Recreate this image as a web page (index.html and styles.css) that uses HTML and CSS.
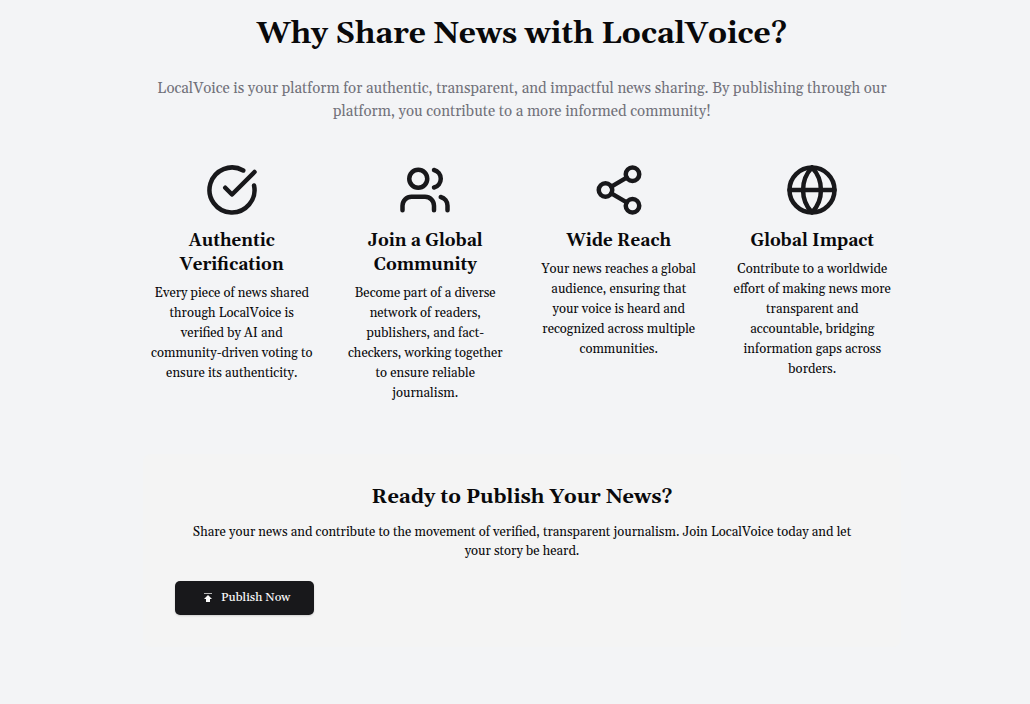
FILE: index.html
```html
<!DOCTYPE html>
<html lang="en">
<head>
<meta charset="utf-8">
<meta name="viewport" content="width=device-width, initial-scale=1">
<title>Why Share News with LocalVoice?</title>
<link rel="stylesheet" href="styles.css">
</head>
<body>
<main class="page">
  <section class="intro">
    <h1 class="title">Why Share News with LocalVoice?</h1>
    <p class="lead">LocalVoice is your platform for authentic, transparent, and impactful news sharing. By publishing through our platform, you contribute to a more informed community!</p>
  </section>
  <section class="features">
    <article class="feature">
      <svg class="icon" viewBox="0 0 24 24" aria-hidden="true"><path d="M21.801 10A10 10 0 1 1 17 3.335"/><path d="m9 11 3 3L22 4"/></svg>
      <h2 class="feature-title">Authentic Verification</h2>
      <p class="feature-text">Every piece of news shared through LocalVoice is verified by AI and community-driven voting to ensure its authenticity.</p>
    </article>
    <article class="feature">
      <svg class="icon" viewBox="0 0 24 24" aria-hidden="true"><path d="M16 21v-2a4 4 0 0 0-4-4H6a4 4 0 0 0-4 4v2"/><circle cx="9" cy="7" r="4"/><path d="M22 21v-2a4 4 0 0 0-3-3.87"/><path d="M16 3.13a4 4 0 0 1 0 7.75"/></svg>
      <h2 class="feature-title">Join a Global Community</h2>
      <p class="feature-text">Become part of a diverse network of readers, publishers, and fact-checkers, working together to ensure reliable journalism.</p>
    </article>
    <article class="feature">
      <svg class="icon" viewBox="0 0 24 24" aria-hidden="true"><circle cx="18" cy="5" r="3"/><circle cx="6" cy="12" r="3"/><circle cx="18" cy="19" r="3"/><path d="m8.59 13.51 6.83 3.98M15.41 6.51l-6.82 3.98"/></svg>
      <h2 class="feature-title">Wide Reach</h2>
      <p class="feature-text">Your news reaches a global audience, ensuring that your voice is heard and recognized across multiple communities.</p>
    </article>
    <article class="feature">
      <svg class="icon" viewBox="0 0 24 24" aria-hidden="true"><circle cx="12" cy="12" r="10"/><path d="M12 2c-5.3 5.5-5.3 14.500 0 20c5.300-5.500 5.300-14.500 0-20M2 12h20"/></svg>
      <h2 class="feature-title">Global Impact</h2>
      <p class="feature-text">Contribute to a worldwide effort of making news more transparent and accountable, bridging information gaps across borders.</p>
    </article>
  </section>
  <section class="cta">
    <h2 class="cta-title">Ready to Publish Your News?</h2>
    <p class="cta-text">Share your news and contribute to the movement of verified, transparent journalism. Join LocalVoice today and let your story be heard.</p>
    <button class="publish" type="button">
      <svg class="publish-icon" viewBox="0 0 10 10" aria-hidden="true"><path opacity=".7" d="M1 0h8v1H1z"/><path d="M5 2l4 4H7v3H3V6H1z"/></svg>
      Publish Now
    </button>
  </section>
</main>
</body>
</html>
```
FILE: styles.css
```css
* {
  box-sizing: border-box;
}

body {
  margin: 0;
  padding-left: 14px;
  min-height: 100vh;
  background: #f3f4f6;
  color: #09090b;
  font-family: Georgia, Gelasio, "Liberation Serif", serif;
}

h1, h2, p {
  margin: 0;
}

.page {
  max-width: 758px;
  margin: 0 auto;
  padding: 16px 0 48px;
}

.intro {
  text-align: center;
}

.title {
  font-size: 30px;
  line-height: 36px;
  font-weight: 700;
}

.lead {
  margin-top: 25px;
  color: #71717a;
  font-size: 15px;
  line-height: 23px;
}

.features {
  display: grid;
  grid-template-columns: repeat(4, 1fr);
  gap: 24px;
  margin-top: 40px;
  padding: 0 4px;
}

.feature {
  text-align: center;
}

.icon {
  display: block;
  width: 54px;
  height: 54px;
  margin: 0 auto 12px;
  fill: none;
  stroke: #18181b;
  stroke-width: 2;
  stroke-linecap: round;
  stroke-linejoin: round;
}

.feature-title {
  font-size: 17px;
  line-height: 24px;
  font-weight: 700;
}

.feature-text {
  margin-top: 6px;
  padding: 0 3px;
  font-size: 13px;
  line-height: 20px;
}

.cta {
  margin-top: 51px;
  padding: 29px 32px 32px;
  border-radius: 8px;
  background: #f4f4f4;
}

.cta-title {
  font-size: 20px;
  line-height: 28px;
  text-align: center;
}

.cta-text {
  margin-top: 12px;
  padding: 0 8px;
  font-size: 13px;
  line-height: 19px;
  text-align: center;
}

.publish {
  display: flex;
  align-items: center;
  gap: 8px;
  height: 34px;
  margin-top: 20px;
  padding: 0 24px 0 28px;
  border: 0;
  border-radius: 5px;
  background: #18181b;
  color: #fafafa;
  font: 500 12px/20px Georgia, Gelasio, "Liberation Serif", serif;
  box-shadow: 0 1px 2px rgb(0 0 0 / 15%);
}

.publish-icon {
  width: 10px;
  height: 10px;
  fill: currentColor;
}
```
